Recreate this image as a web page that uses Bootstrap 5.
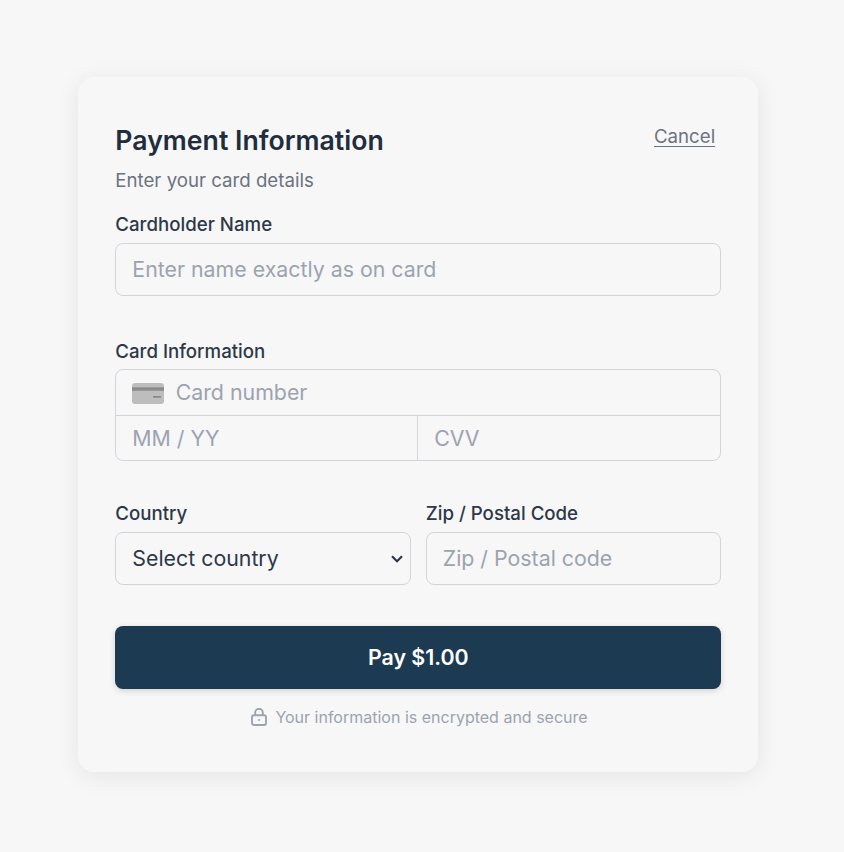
<!DOCTYPE html>
<html lang="en">
<head>
<meta charset="utf-8">
<title>Payment Information</title>
<link href="https://cdn.jsdelivr.net/npm/bootstrap@5.3.0/dist/css/bootstrap.min.css" rel="stylesheet">
<style>
html,body{height:100%}
body{font-family:Inter,"Liberation Sans",sans-serif;background:#f7f7f8;color:#1f2937;overflow:hidden}
.pay-wrap{height:852px;padding-top:77.33px;padding-left:78.33px}
.pay-card{width:679.33px;height:694.67px;background:#f7f7f8;border-radius:16px;box-shadow:0 4px 24px rgba(0,0,0,.08);padding:44.67px 36.5px 0 37px}
.pay-title{font-size:26.67px;font-weight:600;line-height:36px;margin:0;color:#1f2d3d}
.pay-cancel{font-size:18.67px;line-height:26px;color:#6b7280;margin:2px 6px 0 0;text-decoration:underline;text-underline-offset:3px}
.pay-sub{font-size:18.67px;line-height:26px;color:#6b7280;margin:10px 0 0}
.pay-label{display:block;font-size:18.67px;font-weight:500;line-height:26px;color:#2d3748;margin:0 0 5.5px}
.pay-label-tight{margin-bottom:4.33px}
.pay-block-name{margin-top:18px}
.pay-block-card{margin-top:43px}
.pay-block-row{margin-top:40.17px;gap:15px}
.pay-input.form-control,.pay-select.form-select{height:52.5px;font-size:21.33px;font-family:inherit;border:1px solid #d1d5db;border-radius:8px;padding:0 16px 1px;background-color:transparent;color:#2d3748;box-shadow:none}
.pay-input::placeholder,.pay-bare::placeholder{color:#9ca3af;opacity:1}
.pay-select.form-select{background-image:url("data:image/svg+xml,%3Csvg xmlns='http://www.w3.org/2000/svg' viewBox='0 0 12 8'%3E%3Cpath fill='none' stroke='%232d3748' stroke-width='2.2' d='M1 1.3l5 5 5-5'/%3E%3C/svg%3E");background-position:right 6.5px center;background-size:12px 8px;padding:0 24px 0 16px}
.pay-group{border:1px solid #d1d5db;border-radius:8px;height:91.5px}
.pay-line{height:45px;padding-left:15.67px;padding-top:1px}
.pay-line2{height:44.5px;border-top:1px solid #d1d5db;padding-top:2px}
.pay-half{width:calc(50% - 1px);padding-left:16px}
.pay-half+.pay-half{width:calc(50% + 1px);border-left:1px solid #d1d5db;margin-top:-2px;padding-top:2px}
.pay-bare{border:0;outline:0;background:transparent;width:100%;min-width:0;font-size:21.33px;font-family:inherit;padding:0;color:#2d3748}
.pay-cardicon{margin-right:11.67px}
.pay-btn.btn{display:block;width:100%;height:63px;margin-top:41px;padding-top:8px;background:#1c3a52;color:#fff;border:0;border-radius:8px;font-size:21.33px;font-weight:600;box-shadow:0 2px 6px rgba(0,0,0,.15)}
.pay-secure{font-size:16px;line-height:24px;color:#9ca3af;margin-top:16px;padding-left:2.5px}
</style>
</head>
<body>
<div class="pay-wrap">
  <div class="pay-card">
    <div class="d-flex justify-content-between align-items-start">
      <h1 class="pay-title">Payment Information</h1>
      <a href="#" class="pay-cancel">Cancel</a>
    </div>
    <p class="pay-sub">Enter your card details</p>
    <div class="pay-block-name">
      <label class="pay-label" for="nm">Cardholder Name</label>
      <input id="nm" class="form-control pay-input" placeholder="Enter name exactly as on card">
    </div>
    <div class="pay-block-card">
      <label class="pay-label pay-label-tight">Card Information</label>
      <div class="pay-group">
        <div class="pay-line d-flex align-items-center">
          <svg width="32" height="21" viewBox="0 0 32 21" class="flex-shrink-0 pay-cardicon" aria-hidden="true">
            <rect width="32" height="21" rx="3" fill="#bdbdbd"/>
            <rect y="4.3" width="32" height="3.4" fill="#8a8a8a"/>
            <rect x="21" y="13" width="8" height="1.7" fill="#8a8a8a"/>
          </svg>
          <input class="pay-bare" placeholder="Card number" aria-label="Card number">
        </div>
        <div class="pay-line2 d-flex">
          <div class="pay-half d-flex align-items-center"><input class="pay-bare" placeholder="MM / YY" aria-label="Expiry"></div>
          <div class="pay-half d-flex align-items-center"><input class="pay-bare" placeholder="CVV" aria-label="CVV"></div>
        </div>
      </div>
    </div>
    <div class="d-flex pay-block-row">
      <div class="w-50">
        <label class="pay-label" for="ct">Country</label>
        <select id="ct" class="form-select pay-select"><option>Select country</option></select>
      </div>
      <div class="w-50">
        <label class="pay-label" for="zp">Zip / Postal Code</label>
        <input id="zp" class="form-control pay-input" placeholder="Zip / Postal code">
      </div>
    </div>
    <button type="button" class="btn pay-btn">Pay $1.00</button>
    <div class="pay-secure d-flex justify-content-center align-items-center gap-2">
      <svg width="16" height="18" viewBox="0 0 16 18" fill="none" stroke="#9ca3af" stroke-width="1.9" aria-hidden="true">
        <rect x="1" y="7.2" width="14" height="9.8" rx="2"/>
        <path d="M4.2 7V4.6a3.8 3.8 0 0 1 7.6 0V7"/>
        <circle cx="8" cy="12" r="1.1" fill="#9ca3af" stroke="none"/>
      </svg>
      <span>Your information is encrypted and secure</span>
    </div>
  </div>
</div>
</body>
</html>
